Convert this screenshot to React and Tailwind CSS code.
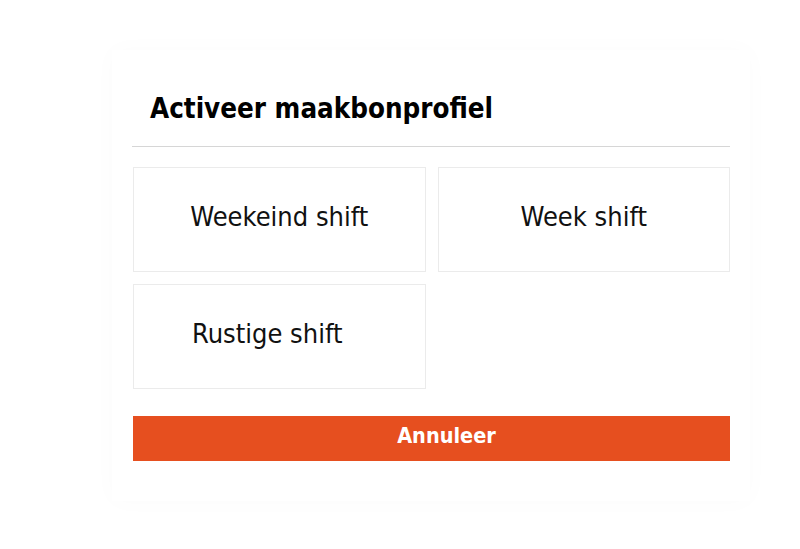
import React from 'react';

const shifts = [
  { label: 'Weekeind shift', cls: '' },
  { label: 'Week shift', cls: '' },
  { label: 'Rustige shift', cls: 'pr-[24px]' },
];

function App() {
  return (
    <div className="w-full h-[549px] bg-white font-['DejaVu_Sans_Condensed','DejaVu_Sans',sans-serif]">
      <div className="flex pt-[50px] pl-[112px]">
        <div className="w-[638px] px-[20px] pb-[40px] bg-white shadow-[0_0_24px_rgba(0,0,0,0.02)]">
          <div className="pt-[42px] pb-[22px] border-b border-[#d6d6d6]">
            <h1 className="pl-[18px] text-[27.5px] leading-[32px] font-bold text-black">Activeer maakbonprofiel</h1>
          </div>
          <div className="grid grid-cols-2 gap-3 mt-[20px] pl-px">
            {shifts.map((s) => (
              <button
                key={s.label}
                className={`h-[105px] flex items-center justify-center pb-[4px] border border-[#ebebeb] bg-white text-[27px] text-[#111] ${s.cls}`}
              >
                {s.label}
              </button>
            ))}
          </div>
          <button className="mt-[27px] ml-px w-[597px] h-[45px] flex items-center justify-center pl-[30px] pb-[5px] bg-[#e64f1f] text-white text-[21.5px] font-bold">
            Annuleer
          </button>
        </div>
      </div>
    </div>
  );
}

export default App;
